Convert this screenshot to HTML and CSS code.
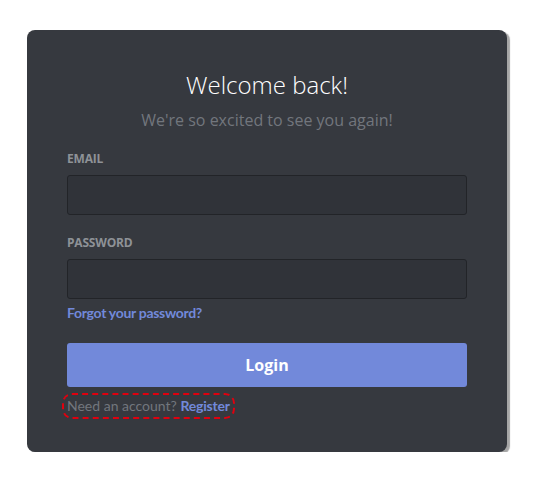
FILE: index.html
```html
<!DOCTYPE html>
<html lang="en">
<head>
<meta charset="utf-8">
<title>Login</title>
<link rel="stylesheet" href="styles.css">
</head>
<body>
<div class="card">
  <h1 class="title">Welcome back!</h1>
  <p class="subtitle">We're so excited to see you again!</p>
  <form class="form">
    <label class="label">EMAIL</label>
    <div class="input"></div>
    <label class="label label-pw">PASSWORD</label>
    <div class="input"></div>
    <a class="link forgot">Forgot your password?</a>
    <button type="button" class="btn">Login</button>
    <div class="register-row">
      <span class="highlight"><span class="muted">Need an account?</span> <a class="link reg">Register</a></span>
    </div>
  </form>
</div>
</body>
</html>
```
FILE: styles.css
```css
* { box-sizing: border-box; }
html, body { margin: 0; padding: 0; background: #fff; }
body { font-family: "Open Sans", "Lato", sans-serif; }
.card {
  margin: 30px 0 0 27px;
  width: 480px;
  background: #36393f;
  border-radius: 8px;
  box-shadow: 3px 2px 1px rgba(0,0,0,0.35);
  padding: 40px 40px 33px;
}
.title {
  margin: 0;
  text-align: center;
  color: #fff;
  font-weight: 300;
  font-size: 24px;
  line-height: 30px;
}
.subtitle {
  margin: 10px 0 0;
  text-align: center;
  color: #72767d;
  font-size: 16px;
  line-height: 20px;
}
.form { display: flex; flex-direction: column; align-items: stretch; margin-top: 20px; }
.label {
  color: #8e9297;
  font-size: 12px;
  font-weight: 700;
  line-height: 17px;
  margin-bottom: 8px;
  letter-spacing: -0.2px;
}
.label-pw { margin-top: 19px; }
.input {
  height: 40px;
  background: #303339;
  border: 1px solid #222428;
  border-radius: 3px;
}
.link { color: #7289da; cursor: pointer; }
.forgot {
  margin-top: 4px;
  font-family: "Lato", sans-serif;
  font-size: 14px;
  line-height: 20px;
  font-weight: 700;
  letter-spacing: -0.3px;
  align-self: flex-start;
}
.btn {
  margin-top: 20px;
  height: 44px;
  border: 0;
  border-radius: 3px;
  background: #7289da;
  color: #fff;
  font-family: inherit;
  font-size: 16px;
  font-weight: 700;
}
.register-row { margin-top: 6px; display: flex; }
.highlight {
  margin-left: -5px;
  border: 2px dashed #e0000f;
  border-radius: 10px;
  padding: 1px 3px;
  font-family: "Lato", sans-serif;
  font-size: 14px;
  line-height: 20px;
}
.muted { color: #72767d; }
.reg { font-weight: 700; letter-spacing: -0.2px; }
```
